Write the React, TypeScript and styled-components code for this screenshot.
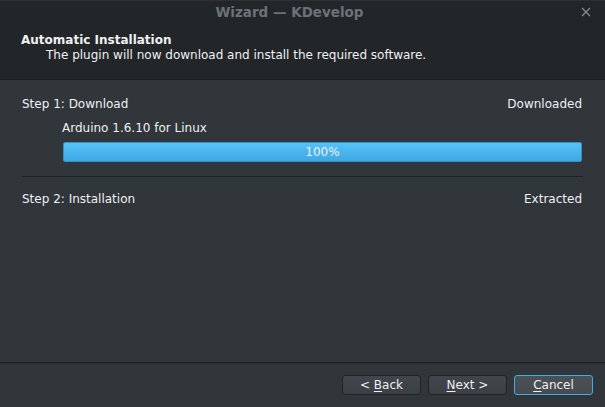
import React from "react";
import styled, { createGlobalStyle } from "styled-components";

const Global = createGlobalStyle`
  html, body { margin: 0; padding: 0; background: #31363b; }
  body { font-family: "DejaVu Sans", "Noto Sans", sans-serif; font-size: 12px; color: #eff0f1; }
  #root { width: 605px; height: 407px; }
`;

const Window = styled.div`
  width: 605px;
  height: 407px;
  display: flex;
  flex-direction: column;
  background: #31363b;
  overflow: hidden;
`;

const TitleBar = styled.div`
  height: 23px;
  flex: none;
  display: flex;
  align-items: center;
  justify-content: center;
  position: relative;
  background: #232629;
  border-top: 1px solid #2d3135;
  box-sizing: border-box;
  padding-right: 26px;
  color: #6b7379;
  font-weight: bold;
  font-size: 13.5px;
`;

const CloseIcon = styled.svg`
  position: absolute;
  right: 14px;
  top: 6px;
`;

const Header = styled.div`
  height: 57px;
  flex: none;
  box-sizing: border-box;
  background: #232629;
  border-bottom: 1px solid #1c1f22;
  padding: 9px 0 0 21px;
  display: flex;
  flex-direction: column;
`;

const HeaderTitle = styled.div`
  font-weight: bold;
  font-size: 12px;
  line-height: 16px;
`;

const HeaderSub = styled.div`
  padding-left: 25px;
  line-height: 15px;
`;

const Body = styled.div`
  flex: 1;
  padding: 16px 23px 0 22px;
  display: flex;
  flex-direction: column;
`;

const StepRow = styled.div`
  display: flex;
  justify-content: space-between;
  line-height: 16px;
  height: 16px;
`;

const Indented = styled.div`
  padding-left: 40px;
  margin-top: 8px;
  line-height: 16px;
`;

const Progress = styled.div`
  margin: 6px 0 0 41px;
  height: 20px;
  box-sizing: border-box;
  border: 1px solid #3592c4;
  border-radius: 2px;
  background: linear-gradient(#56c2f6, #3da8e4);
  display: flex;
  align-items: center;
  justify-content: center;
  color: #eff0f1;
  line-height: 16px;
`;

const Separator = styled.div`
  margin: 14px -1px 14px 0;
  height: 1px;
  background: #1e2124;
`;

const Footer = styled.div`
  flex: none;
  height: 45px;
  box-sizing: border-box;
  border-top: 1px solid #1e2124;
  box-shadow: inset 0 1px 0 #2a2e32;
  display: flex;
  justify-content: flex-end;
  gap: 7px;
  padding: 12px 12px 0 0;
`;

const Button = styled.button<{ $focus?: boolean }>`
  width: 79px;
  height: 20px;
  box-sizing: border-box;
  border-radius: 3px;
  border: 1px solid ${(p) => (p.$focus ? "#3daee9" : "#212427")};
  background: ${(p) => (p.$focus ? "linear-gradient(#4a5157, #454b51)" : "linear-gradient(#41464c, #3b4045)")};
  color: #eff0f1;
  font-family: "DejaVu Sans", "Noto Sans", sans-serif;
  font-size: 12px;
  padding: 0;
  line-height: 16px;
  display: flex;
  align-items: center;
  justify-content: center;
  white-space: pre;
  u { text-underline-offset: 2px; }
`;

export default function App() {
  return (
    <>
      <Global />
      <Window>
        <TitleBar>
          Wizard — KDevelop
          <CloseIcon width="10" height="10" viewBox="0 0 10 10">
            <path d="M1 1 L9 9 M9 1 L1 9" stroke="#8a9096" strokeWidth="1.1" />
          </CloseIcon>
        </TitleBar>
        <Header>
          <HeaderTitle>Automatic Installation</HeaderTitle>
          <HeaderSub>The plugin will now download and install the required software.</HeaderSub>
        </Header>
        <Body>
          <StepRow>
            <span>Step 1: Download</span>
            <span>Downloaded</span>
          </StepRow>
          <Indented>Arduino 1.6.10 for Linux</Indented>
          <Progress>100%</Progress>
          <Separator />
          <StepRow>
            <span>Step 2: Installation</span>
            <span>Extracted</span>
          </StepRow>
        </Body>
        <Footer>
          <Button>{"< "}<u>B</u>ack</Button>
          <Button><u>N</u>{"ext >"}</Button>
          <Button $focus><u>C</u>ancel</Button>
        </Footer>
      </Window>
    </>
  );
}
